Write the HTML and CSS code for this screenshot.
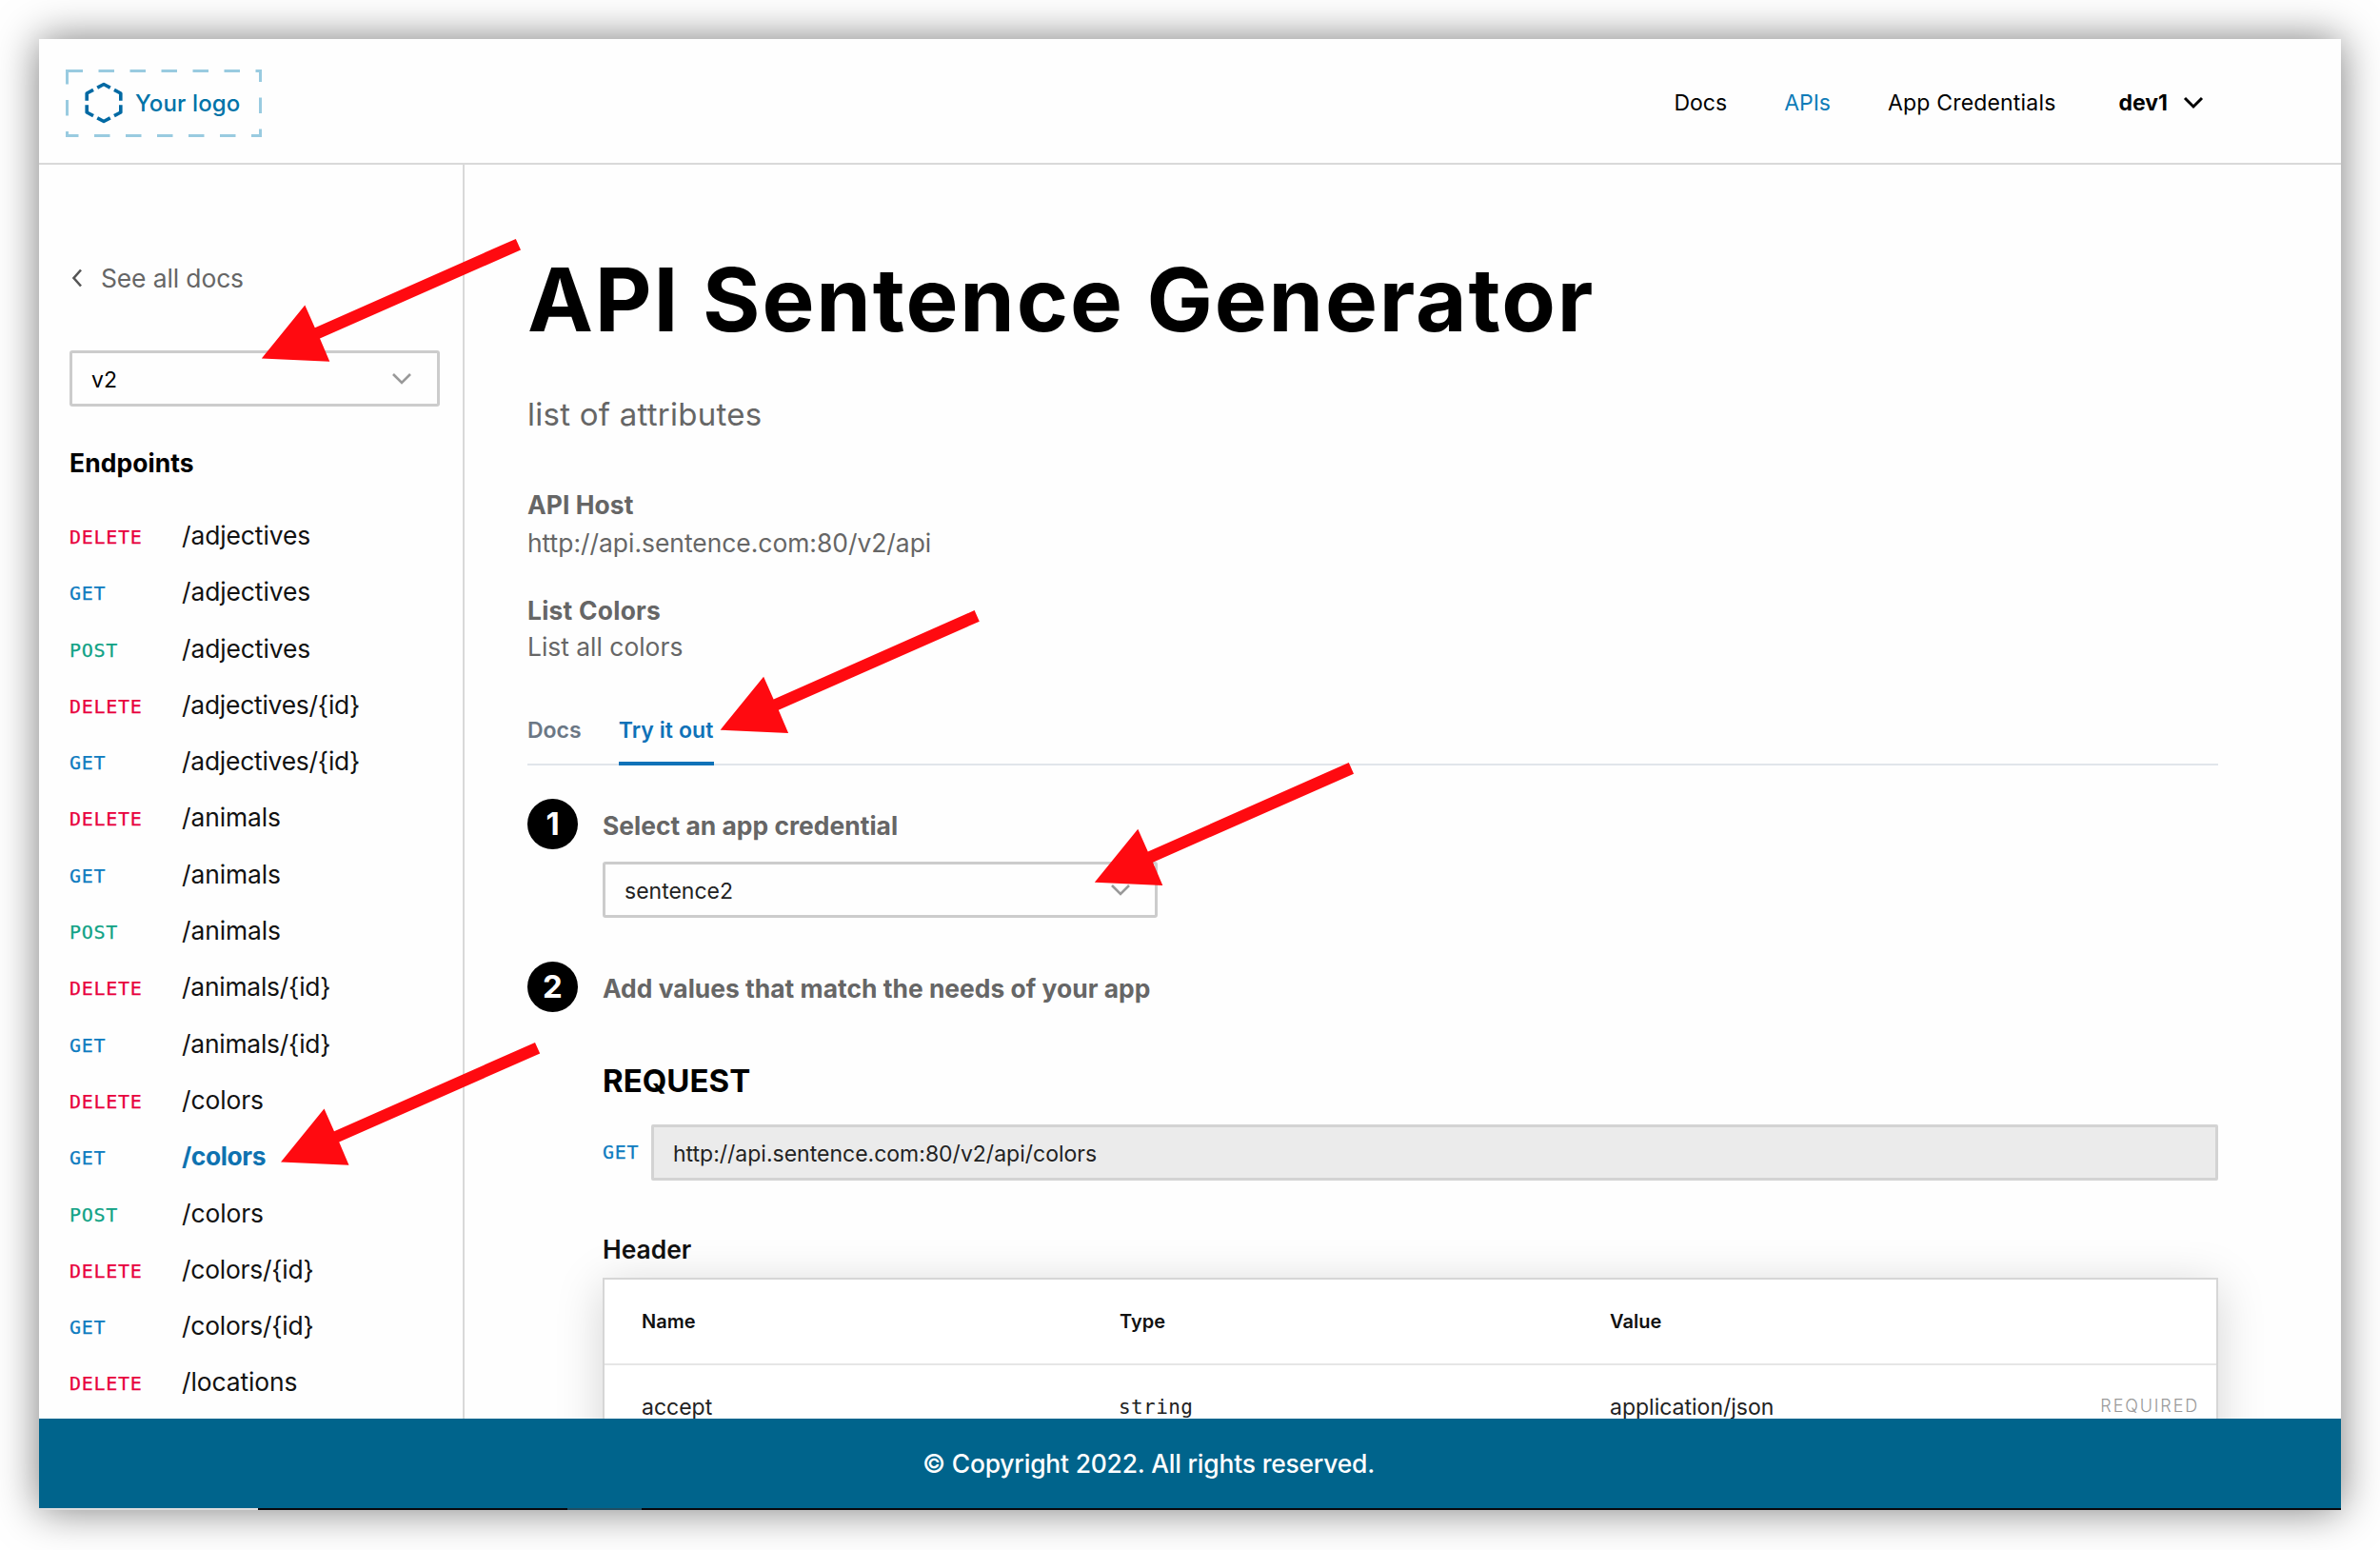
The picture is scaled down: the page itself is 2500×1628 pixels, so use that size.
FILE: index.html
```html
<!DOCTYPE html>
<html lang="en">
<head>
<meta charset="utf-8">
<title>API Sentence Generator</title>
<link rel="stylesheet" href="styles.css">
</head>
<body>
<div class="window">
  <header class="topbar">
    <a class="logo">
      <svg class="logo-frame" viewBox="0 0 206 71" fill="none"><path d="M1.5 1.5H204.5V69.5H1.5Z" stroke="#99cbe0" stroke-width="3" stroke-dasharray="16.5"/></svg>
      <svg class="logo-mark" viewBox="0 0 40 44" fill="none"><path d="M20 2.5L37.8 12V32L20 41.5L2.2 32V12Z" stroke="#0069a3" stroke-width="3.6" stroke-linejoin="round" pathLength="120" stroke-dasharray="15.3 4.7" stroke-dashoffset="7.65"/></svg>
      <span class="logo-text">Your logo</span>
    </a>
    <nav class="nav">
      <a>Docs</a>
      <a class="active">APIs</a>
      <a class="nav-creds">App Credentials</a>
      <a class="user"><span>dev1</span><svg viewBox="0 0 22 14" fill="none"><path d="M2 2L11 11L20 2" stroke="#000" stroke-width="3"/></svg></a>
    </nav>
  </header>
  <div class="body">
    <aside class="sidebar">
      <a class="back"><svg viewBox="0 0 14 22" fill="none"><path d="M12 2.5L4.5 11L12 19.5" stroke="#555" stroke-width="2.6"/></svg><span>See all docs</span></a>
      <div class="select version"><span>v2</span><svg viewBox="0 0 22 14" fill="none"><path d="M2 2L11 11L20 2" stroke="#999" stroke-width="2.6"/></svg></div>
      <h3 class="side-title">Endpoints</h3>
      <ul class="endpoints">
        <li><b class="m delete">DELETE</b><span>/adjectives</span></li>
        <li><b class="m get">GET</b><span>/adjectives</span></li>
        <li><b class="m post">POST</b><span>/adjectives</span></li>
        <li><b class="m delete">DELETE</b><span class="param">/adjectives/{id}</span></li>
        <li><b class="m get">GET</b><span class="param">/adjectives/{id}</span></li>
        <li><b class="m delete">DELETE</b><span>/animals</span></li>
        <li><b class="m get">GET</b><span>/animals</span></li>
        <li><b class="m post">POST</b><span>/animals</span></li>
        <li><b class="m delete">DELETE</b><span class="param">/animals/{id}</span></li>
        <li><b class="m get">GET</b><span class="param">/animals/{id}</span></li>
        <li><b class="m delete">DELETE</b><span>/colors</span></li>
        <li class="current"><b class="m get">GET</b><span>/colors</span></li>
        <li><b class="m post">POST</b><span>/colors</span></li>
        <li><b class="m delete">DELETE</b><span class="param">/colors/{id}</span></li>
        <li><b class="m get">GET</b><span class="param">/colors/{id}</span></li>
        <li><b class="m delete">DELETE</b><span>/locations</span></li>
      </ul>
    </aside>
    <main class="content">
      <h1>API Sentence Generator</h1>
      <p class="lead">list of attributes</p>
      <h4 class="host-title">API Host</h4>
      <p class="text">http://api.sentence.com:80/v2/api</p>
      <h4 class="op-title">List Colors</h4>
      <p class="text op-text">List all colors</p>
      <div class="tabs"><a class="tab">Docs</a><a class="tab on">Try it out</a></div>
      <section class="step one">
        <span class="num">1</span>
        <div class="step-body">
          <h4>Select an app credential</h4>
          <div class="select cred"><span>sentence2</span><svg viewBox="0 0 22 14" fill="none"><path d="M2 2L11 11L20 2" stroke="#999" stroke-width="2.6"/></svg></div>
        </div>
      </section>
      <section class="step two">
        <span class="num">2</span>
        <div class="step-body">
          <h4>Add values that match the needs of your app</h4>
          <h2>REQUEST</h2>
          <div class="request"><b class="m get">GET</b><div class="url"><span>http://api.sentence.com:80/v2/api/colors</span></div></div>
          <h5>Header</h5>
          <div class="table">
            <div class="row head"><span>Name</span><span>Type</span><span>Value</span></div>
            <div class="row"><span>accept</span><code>string</code><span>application/json</span><em>REQUIRED</em></div>
          </div>
        </div>
      </section>
    </main>
  </div>
  <footer class="footer"><span>© Copyright 2022. All rights reserved.</span></footer>
  <div class="strip"><i class="strip-light"></i><i class="strip-dark"></i><i class="strip-blue"></i><i class="strip-dark rest"></i></div>
</div>
<svg class="arrows" viewBox="0 0 2500 1628">
  <defs><path id="arrow" fill="#ff0a10" d="M0 0L45.5 -56L56 -32.2L267 -125.6L272.2 -114L61.2 -21L71.5 3.3Z"/></defs>
  <use href="#arrow" x="274.8" y="376.5"/><use href="#arrow" x="756.6" y="766.7"/><use href="#arrow" x="1149.8" y="926.7"/><use href="#arrow" x="295" y="1220.5"/>
</svg>
</body>
</html>
```
FILE: styles.css
```css
* { box-sizing: border-box; }
body { margin: 0; background: #fff; font-family: Inter, "Liberation Sans", sans-serif; color: #000; width: 2500px; height: 1628px; overflow: hidden; position: relative; }
h1, h2, h3, h4, h5, p, ul { margin: 0; padding: 0; }
h1, h2, h3, h4, h5, p { white-space: nowrap; }
ul { list-style: none; }
.window { margin: 41px; width: 2418px; height: 1545px; background: #fefefe; box-shadow: 0 0 42px rgba(0,0,0,.52); display: flex; flex-direction: column; overflow: hidden; }
.topbar { height: 132px; flex: none; border-bottom: 2px solid #d9d9d9; display: flex; align-items: center; justify-content: space-between; padding: 0 144px 0 28px; }
.logo { position: relative; width: 206px; height: 71px; display: flex; align-items: center; margin-top: 4px; padding-left: 20px; gap: 13px; color: #0073a8; font-size: 24px; font-weight: 550; letter-spacing: .15px; }
.logo-frame { position: absolute; left: 0; top: 0; width: 206px; height: 71px; }
.logo-mark { width: 40px; height: 44px; flex: none; }
.logo-text { white-space: nowrap; }
.nav { display: flex; align-items: center; font-size: 23px; white-space: nowrap; gap: 60px; padding-top: 3px; }
.nav-creds { letter-spacing: .18px; }
.active { color: #0f7cb8; }
.user { display: flex; align-items: center; gap: 16px; font-weight: 700; margin-left: 6px; }
.user svg { width: 22px; height: 14px; }
.body { flex: 1; min-height: 0; display: flex; }
.sidebar { width: 447px; flex: none; border-right: 2px solid #d9d9d9; padding: 99px 25px 0 32px; }
.back { display: flex; align-items: center; height: 40px; font-size: 26.4px; color: #666; gap: 19px; letter-spacing: -.1px; }
.back svg { width: 14px; height: 22px; }
.select { border: 3px solid #ccc; border-radius: 3px; height: 59px; display: flex; align-items: center; justify-content: space-between; font-size: 23px; }
.select span { padding-top: 2px; }
.select svg { width: 22px; height: 14px; }
.version { margin-top: 56px; width: 389px; padding: 0 26px 0 20px; }
.side-title { font-size: 26.4px; line-height: 40px; margin-top: 39px; font-weight: 700; letter-spacing: .1px; }
.endpoints { margin-top: 27px; }
.endpoints li { height: 59.3px; display: flex; align-items: baseline; font-size: 26.4px; line-height: 59.3px; letter-spacing: -.08px; white-space: nowrap; color: #111; }
.endpoints .param { letter-spacing: -.22px; }
.m { font: 400 20px "DejaVu Sans Mono", monospace; letter-spacing: .7px; -webkit-text-stroke: .25px; }
.endpoints .m { width: 118px; flex: none; position: relative; top: -1px; }
.delete { color: #e8003d; }
.get { color: #0f7cc0; }
.post { color: #10a285; }
.current span { color: #0f72b0; font-weight: 700; letter-spacing: -.4px; }
.content { flex: 1; padding: 89px 129px 0 66px; color: #666; }
h1 { font-size: 92.4px; line-height: 104px; color: #000; font-weight: 700; letter-spacing: 1.85px; }
.lead { font-size: 33px; line-height: 44px; margin-top: 47px; letter-spacing: .25px; }
h4 { font-size: 26.4px; line-height: 40px; font-weight: 700; color: #666; letter-spacing: .08px; }
.host-title { margin-top: 53px; }
.text { font-size: 26.4px; line-height: 40px; }
.op-title { margin-top: 31px; letter-spacing: .25px; }
.op-text { margin-top: -2px; }
.tabs { display: flex; gap: 39px; border-bottom: 2px solid #e1e5eb; margin-top: 45px; height: 60px; font-size: 23px; line-height: 46px; font-weight: 600; color: #6b7785; }
.tab { height: 60px; white-space: nowrap; }
.tab.on { color: #0f72b8; border-bottom: 4px solid #0f72b8; letter-spacing: .1px; }
.step { display: flex; gap: 26px; }
.one { margin-top: 35px; }
.two { margin-top: 46px; }
.num { width: 53px; height: 53px; flex: none; border-radius: 50%; background: #000; color: #fff; font-size: 33px; font-weight: 700; line-height: 53px; text-align: center; }
.step-body { flex: 1; }
.step h4 { margin-top: 8px; letter-spacing: .02px; }
.cred { width: 583px; margin-top: 18px; padding: 0 25px 0 20px; color: #222; }
h2 { font-size: 33px; line-height: 44px; color: #000; font-weight: 700; margin-top: 55px; }
.request { display: flex; align-items: center; margin-top: 24px; }
.request .m { width: 51px; position: relative; top: -1px; }
.url { flex: 1; height: 59px; border: 3px solid #d3d3d3; border-radius: 2px; background: #ebebeb; display: flex; align-items: center; padding: 3px 0 0 20px; font-size: 23px; color: #222; }
h5 { font-size: 26.4px; line-height: 40px; font-weight: 600; color: #111; margin-top: 52px; }
.table { margin-top: 10px; border: 2px solid #d6d6d6; background: #fff; height: 270px; box-shadow: 0 8px 46px rgba(0,0,0,.17); color: #222; }
.row { display: grid; grid-template-columns: 502px 515px 1fr auto; align-items: center; height: 90px; padding: 0 18px 0 39px; border-bottom: 2px solid #e6e6e6; font-size: 23px; }
.head { font-size: 20px; font-weight: 600; color: #111; }
.row code { font: 21px "DejaVu Sans Mono", monospace; letter-spacing: .4px; margin: -1px 0 0 -1px; }
.row em { font-style: normal; font-size: 18px; letter-spacing: 1.85px; color: #999; font-weight: 300; margin-top: -3px; }
.footer { height: 94px; flex: none; background: #00648c; color: #fff; font-size: 26.4px; font-weight: 500; display: flex; align-items: center; justify-content: center; padding-right: 87px; letter-spacing: -.18px; }
.strip { height: 2px; flex: none; display: flex; }
.strip i { display: block; height: 2px; }
.strip-light { width: 230px; background: #ddd; }
.strip-dark { width: 325px; background: #08080c; }
.strip-blue { width: 78px; background: #1f4e63; }
.strip .rest { flex: 1; }
.arrows { position: absolute; left: 0; top: 0; width: 2500px; height: 1628px; pointer-events: none; }
```
